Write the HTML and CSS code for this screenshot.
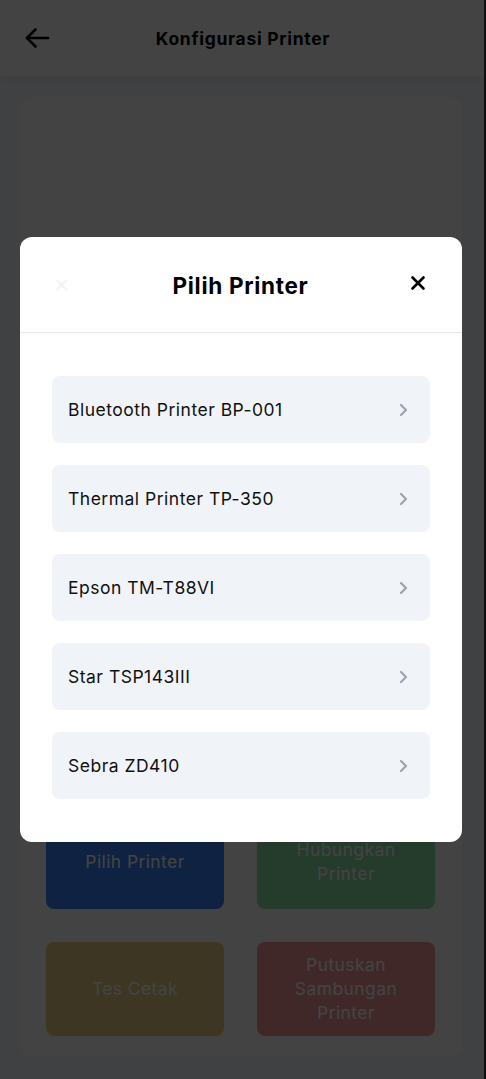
FILE: index.html
```html
<!DOCTYPE html>
<html lang="id">
<head>
    <meta charset="UTF-8">
    <meta name="viewport" content="width=device-width, initial-scale=1.0">
    <title>Konfigurasi Printer</title>
    <link rel="stylesheet" href="styles.css">
</head>
<body>
    <div class="app">
        <header class="topbar">
            <button class="icon-btn back-btn" aria-label="Kembali">
                <svg width="26" height="22" viewBox="0 0 26 22" fill="none" stroke="#000" stroke-width="2.6" stroke-linecap="round" stroke-linejoin="round">
                    <path d="M24 11H3"/>
                    <path d="M11.5 2.5L3 11l8.5 8.5"/>
                </svg>
            </button>
            <h1>Konfigurasi Printer</h1>
            <span class="topbar-spacer"></span>
        </header>

        <main class="content">
            <section class="panel">
                <div class="actions">
                    <button class="action action-blue">Pilih Printer</button>
                    <button class="action action-green">Hubungkan Printer</button>
                    <button class="action action-yellow">Tes Cetak</button>
                    <button class="action action-red">Putuskan Sambungan Printer</button>
                </div>
            </section>
        </main>

        <div class="overlay">
            <div class="modal">
                <div class="modal-head">
                    <span class="ghost-close">&times;</span>
                    <h2>Pilih Printer</h2>
                    <button class="icon-btn close-btn" aria-label="Tutup">
                        <svg width="16" height="16" viewBox="0 0 16 16" fill="none" stroke="#000" stroke-width="2.6" stroke-linecap="round">
                            <path d="M2.5 2.5l11 11M13.5 2.5l-11 11"/>
                        </svg>
                    </button>
                </div>
                <ul class="printer-list" id="printerList"></ul>
            </div>
        </div>
    </div>

    <script>
        const printers = [
            "Bluetooth Printer BP-001",
            "Thermal Printer TP-350",
            "Epson TM-T88VI",
            "Star TSP143III",
            "Sebra ZD410"
        ];

        const chevron = `
            <svg width="10" height="14" viewBox="0 0 10 14" fill="none" stroke="#9ca3af" stroke-width="2.2" stroke-linecap="round" stroke-linejoin="round">
                <path d="M3 2l5 5-5 5"/>
            </svg>`;

        document.getElementById('printerList').innerHTML = printers.map(name => `
            <li class="printer-item">
                <span>${name}</span>
                ${chevron}
            </li>
        `).join('');
    </script>
</body>
</html>
```

FILE: styles.css
```css
* {
    margin: 0;
    padding: 0;
    box-sizing: border-box;
}

html {
    background: #101010;
}

body {
    font-family: Inter, 'Noto Sans', sans-serif;
    color: #111;
}

.app {
    position: relative;
    width: 484px;
    min-height: 1079px;
    background: #f1f5f9;
    overflow: hidden;
}

button {
    font-family: inherit;
    border: none;
    background: none;
    cursor: pointer;
}

.topbar {
    height: 76px;
    display: flex;
    align-items: center;
    justify-content: space-between;
    padding: 0 20px 0 22px;
    background: #fff;
    box-shadow: 0 2px 8px rgba(0, 0, 0, 0.06);
}

.topbar h1 {
    font-size: 17.5px;
    font-weight: 700;
    letter-spacing: 0.7px;
    color: #000;
}

.icon-btn {
    display: flex;
    align-items: center;
    justify-content: center;
}

.back-btn {
    width: 30px;
    height: 30px;
}

.topbar-spacer {
    width: 30px;
}

.content {
    padding: 21px 22px 22px 20px;
}

.panel {
    background: #fff;
    border-radius: 12px;
    padding: 718px 27px 21px 26px;
}

.actions {
    display: grid;
    grid-template-columns: 1fr 1fr;
    column-gap: 33px;
    row-gap: 33px;
}

.action {
    height: 94px;
    border-radius: 8px;
    color: #fff;
    font-size: 17.5px;
    letter-spacing: 0.4px;
    line-height: 24px;
    padding: 0 26px;
}

.action-blue { background: #3b82f6; }
.action-green { background: #8fdfa8; }
.action-yellow { background: #e6cf85; }
.action-red { background: #f29a9a; }

.overlay {
    position: absolute;
    inset: 0;
    background: rgba(0, 0, 0, 0.737);
    padding: 237px 22px 0 20px;
}

.modal {
    background: #fff;
    border-radius: 12px;
}

.modal-head {
    height: 96px;
    display: flex;
    align-items: center;
    justify-content: space-between;
    padding: 0 34px 4px 33px;
    border-bottom: 1px solid #e7e7e7;
}

.modal-head h2 {
    font-size: 22.5px;
    font-weight: 700;
    letter-spacing: 0.7px;
    color: #000;
    padding-top: 5px;
}

.ghost-close {
    width: 20px;
    font-size: 26px;
    color: #f3f3f3;
    line-height: 1;
}

.close-btn {
    width: 20px;
    height: 20px;
}

.printer-list {
    list-style: none;
    padding: 43px 32px 43px 32px;
    display: flex;
    flex-direction: column;
    gap: 22px;
}

.printer-item {
    height: 67px;
    display: flex;
    align-items: center;
    justify-content: space-between;
    padding: 0 22px 0 16px;
    background: #f0f3f8;
    border-radius: 8px;
    font-size: 17.5px;
    letter-spacing: 0.5px;
    color: #111;
}
```
